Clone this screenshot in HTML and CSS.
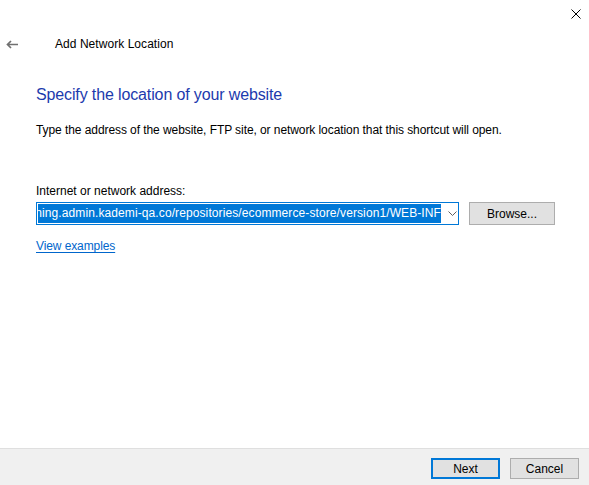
FILE: index.html
```html
<!DOCTYPE html>
<html>
<head>
<meta charset="utf-8">
<link rel="stylesheet" href="styles.css">
</head>
<body>
<div class="window">
  <div class="topbar">
    <svg class="close" width="10" height="10" viewBox="0 0 10 10"><path d="M0.5 0.5 L9.5 9.5 M9.5 0.5 L0.5 9.5" stroke="#000" stroke-width="1" fill="none"/></svg>
  </div>
  <div class="nav">
    <svg class="back" width="12" height="9" viewBox="0 0 12 9"><path d="M12 4.5 H1.5 M5 1 L1.5 4.5 L5 8" stroke="#707070" stroke-width="1.7" fill="none"/></svg>
    <span class="title">Add Network Location</span>
  </div>
  <div class="content">
    <h1 class="heading">Specify the location of your website</h1>
    <p class="desc">Type the address of the website, FTP site, or network location that this shortcut will open.</p>
    <label class="label">Internet or network address:</label>
    <div class="row">
      <div class="combo">
        <div class="field"><span class="sel">http://training.admin.kademi-qa.co/repositories/ecommerce-store/version1/WEB-INF</span></div>
        <svg class="chev" width="9" height="5" viewBox="0 0 9 5"><path d="M0.5 0.5 L4.5 4.5 L8.5 0.5" stroke="#606060" stroke-width="1" fill="none"/></svg>
      </div>
      <button class="btn browse">Browse...</button>
    </div>
    <a class="link" href="#">View examples</a>
  </div>
  <div class="footer">
    <button class="btn next">Next</button>
    <button class="btn">Cancel</button>
  </div>
</div>
</body>
</html>
```
FILE: styles.css
```css
html, body {
  margin: 0;
  padding: 0;
  background: #fff;
}
body {
  font-family: "Liberation Sans", Arial, sans-serif;
  font-size: 12px;
  color: #000;
}
.window {
  width: 589px;
  height: 485px;
  display: flex;
  flex-direction: column;
}
.topbar {
  height: 29px;
  display: flex;
  justify-content: flex-end;
  align-items: flex-start;
  padding: 9px 8px 0 0;
  box-sizing: border-box;
}
.nav {
  height: 30px;
  display: flex;
  align-items: center;
}
.back {
  margin-left: 6px;
  margin-right: 37px;
}
.title {
  line-height: 16px;
  letter-spacing: 0.05px;
}
.content {
  flex: 1;
  display: flex;
  flex-direction: column;
  align-items: flex-start;
  padding-left: 36px;
}
.heading {
  margin: 25px 0 0;
  font-size: 16px;
  font-weight: normal;
  line-height: 21px;
  letter-spacing: -0.13px;
  color: #1c3aad;
}
.desc {
  margin: 17px 0 0;
  line-height: 16px;
  letter-spacing: -0.075px;
}
.label {
  margin-top: 45px;
  line-height: 16px;
}
.row {
  margin-top: 3px;
  display: flex;
  gap: 10px;
}
.combo {
  width: 423px;
  height: 23px;
  box-sizing: border-box;
  border: 1px solid #0078d7;
  display: flex;
  align-items: center;
  padding: 1px;
}
.field {
  width: 403px;
  height: 19px;
  overflow: hidden;
  display: flex;
  justify-content: flex-end;
  background: #0078d7;
}
.sel {
  white-space: nowrap;
  color: #fff;
  line-height: 19px;
  letter-spacing: 0.1px;
}
.chev {
  margin-left: 7px;
}
.btn {
  font-family: "Liberation Sans", Arial, sans-serif;
  font-size: 12px;
  color: #000;
  background: #e1e1e1;
  border: 1px solid #adadad;
  width: 69px;
  height: 21px;
  padding: 0;
  box-sizing: border-box;
}
.browse {
  width: 86px;
  height: 23px;
}
.link {
  margin-top: 13px;
  line-height: 16px;
  letter-spacing: -0.1px;
  color: #0066cc;
  text-decoration: underline;
  text-underline-offset: 2px;
}
.footer {
  height: 37px;
  box-sizing: border-box;
  border-top: 1px solid #dfdfdf;
  background: #f0f0f0;
  display: flex;
  justify-content: flex-end;
  align-items: flex-start;
  gap: 10px;
  padding: 9px 10px 0 0;
}
.next {
  border: 2px solid #0078d7;
}
```
